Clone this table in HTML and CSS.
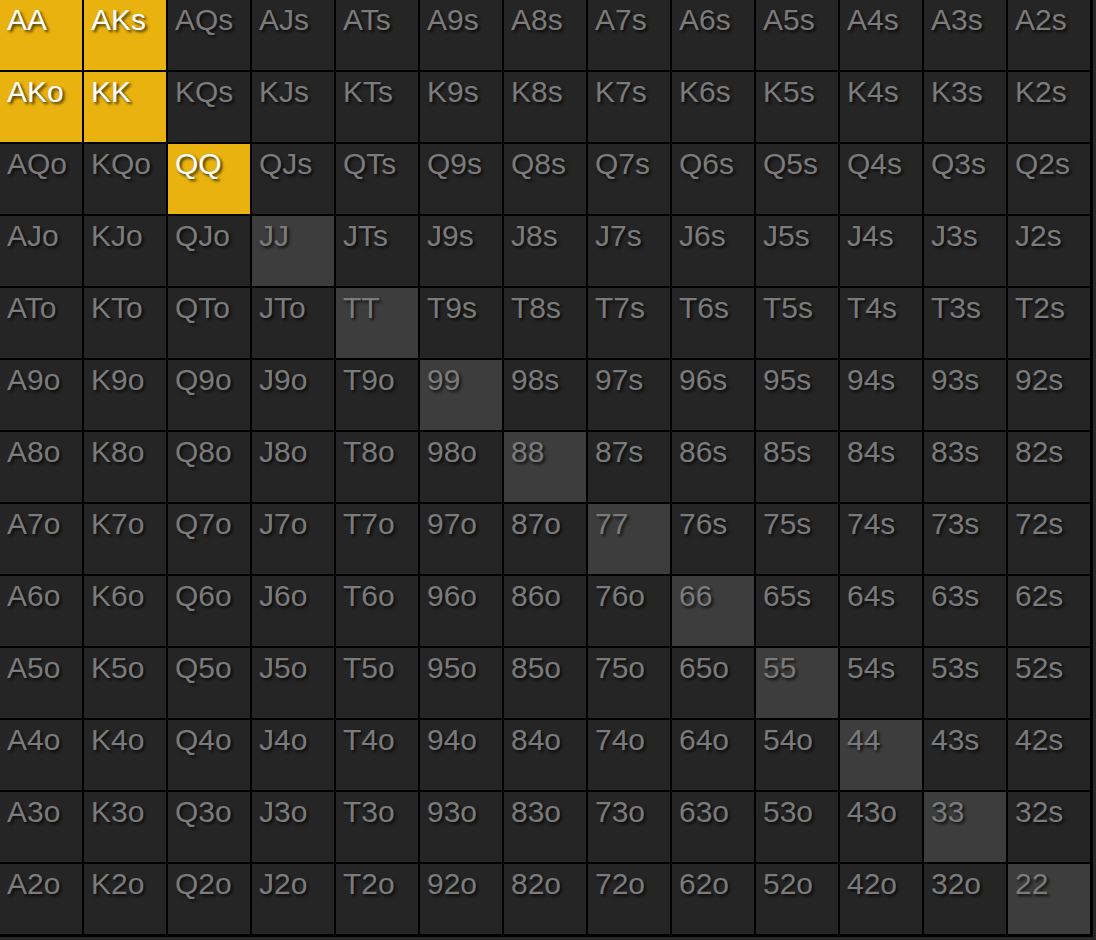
FILE: index.html
```html
<!DOCTYPE html>
<html lang="en">
<head>
<meta charset="utf-8">
<title>Hand range</title>
<link rel="stylesheet" href="styles.css">
</head>
<body>
<div class="grid">
<div class="cell on">AA</div><div class="cell on">AKs</div><div class="cell">AQs</div><div class="cell">AJs</div><div class="cell">ATs</div><div class="cell">A9s</div><div class="cell">A8s</div><div class="cell">A7s</div><div class="cell">A6s</div><div class="cell">A5s</div><div class="cell">A4s</div><div class="cell">A3s</div><div class="cell">A2s</div>
<div class="cell on">AKo</div><div class="cell on">KK</div><div class="cell">KQs</div><div class="cell">KJs</div><div class="cell">KTs</div><div class="cell">K9s</div><div class="cell">K8s</div><div class="cell">K7s</div><div class="cell">K6s</div><div class="cell">K5s</div><div class="cell">K4s</div><div class="cell">K3s</div><div class="cell">K2s</div>
<div class="cell">AQo</div><div class="cell">KQo</div><div class="cell on">QQ</div><div class="cell">QJs</div><div class="cell">QTs</div><div class="cell">Q9s</div><div class="cell">Q8s</div><div class="cell">Q7s</div><div class="cell">Q6s</div><div class="cell">Q5s</div><div class="cell">Q4s</div><div class="cell">Q3s</div><div class="cell">Q2s</div>
<div class="cell">AJo</div><div class="cell">KJo</div><div class="cell">QJo</div><div class="cell pair">JJ</div><div class="cell">JTs</div><div class="cell">J9s</div><div class="cell">J8s</div><div class="cell">J7s</div><div class="cell">J6s</div><div class="cell">J5s</div><div class="cell">J4s</div><div class="cell">J3s</div><div class="cell">J2s</div>
<div class="cell">ATo</div><div class="cell">KTo</div><div class="cell">QTo</div><div class="cell">JTo</div><div class="cell pair">TT</div><div class="cell">T9s</div><div class="cell">T8s</div><div class="cell">T7s</div><div class="cell">T6s</div><div class="cell">T5s</div><div class="cell">T4s</div><div class="cell">T3s</div><div class="cell">T2s</div>
<div class="cell">A9o</div><div class="cell">K9o</div><div class="cell">Q9o</div><div class="cell">J9o</div><div class="cell">T9o</div><div class="cell pair">99</div><div class="cell">98s</div><div class="cell">97s</div><div class="cell">96s</div><div class="cell">95s</div><div class="cell">94s</div><div class="cell">93s</div><div class="cell">92s</div>
<div class="cell">A8o</div><div class="cell">K8o</div><div class="cell">Q8o</div><div class="cell">J8o</div><div class="cell">T8o</div><div class="cell">98o</div><div class="cell pair">88</div><div class="cell">87s</div><div class="cell">86s</div><div class="cell">85s</div><div class="cell">84s</div><div class="cell">83s</div><div class="cell">82s</div>
<div class="cell">A7o</div><div class="cell">K7o</div><div class="cell">Q7o</div><div class="cell">J7o</div><div class="cell">T7o</div><div class="cell">97o</div><div class="cell">87o</div><div class="cell pair">77</div><div class="cell">76s</div><div class="cell">75s</div><div class="cell">74s</div><div class="cell">73s</div><div class="cell">72s</div>
<div class="cell">A6o</div><div class="cell">K6o</div><div class="cell">Q6o</div><div class="cell">J6o</div><div class="cell">T6o</div><div class="cell">96o</div><div class="cell">86o</div><div class="cell">76o</div><div class="cell pair">66</div><div class="cell">65s</div><div class="cell">64s</div><div class="cell">63s</div><div class="cell">62s</div>
<div class="cell">A5o</div><div class="cell">K5o</div><div class="cell">Q5o</div><div class="cell">J5o</div><div class="cell">T5o</div><div class="cell">95o</div><div class="cell">85o</div><div class="cell">75o</div><div class="cell">65o</div><div class="cell pair">55</div><div class="cell">54s</div><div class="cell">53s</div><div class="cell">52s</div>
<div class="cell">A4o</div><div class="cell">K4o</div><div class="cell">Q4o</div><div class="cell">J4o</div><div class="cell">T4o</div><div class="cell">94o</div><div class="cell">84o</div><div class="cell">74o</div><div class="cell">64o</div><div class="cell">54o</div><div class="cell pair">44</div><div class="cell">43s</div><div class="cell">42s</div>
<div class="cell">A3o</div><div class="cell">K3o</div><div class="cell">Q3o</div><div class="cell">J3o</div><div class="cell">T3o</div><div class="cell">93o</div><div class="cell">83o</div><div class="cell">73o</div><div class="cell">63o</div><div class="cell">53o</div><div class="cell">43o</div><div class="cell pair">33</div><div class="cell">32s</div>
<div class="cell">A2o</div><div class="cell">K2o</div><div class="cell">Q2o</div><div class="cell">J2o</div><div class="cell">T2o</div><div class="cell">92o</div><div class="cell">82o</div><div class="cell">72o</div><div class="cell">62o</div><div class="cell">52o</div><div class="cell">42o</div><div class="cell">32o</div><div class="cell pair">22</div>
</div>
</body>
</html>
```

FILE: styles.css
```css
html, body {
  margin: 0;
  padding: 0;
  background: #282828;
  font-family: "Liberation Sans", Arial, sans-serif;
}

.grid {
  display: grid;
  grid-template-columns: repeat(13, 82px);
  grid-auto-rows: 70px;
  gap: 2px;
  padding: 0 3px 3px 0;
  width: max-content;
  background: #000;
}

.cell {
  background: #252525;
  color: #7b7b7b;
  font-size: 30px;
  line-height: 34px;
  padding: 3px 0 0 7px;
  text-shadow: 2px 2px 3px rgba(0, 0, 0, 0.75);
  white-space: nowrap;
  overflow: hidden;
}

.cell.pair {
  background: #3d3d3d;
}

.cell.on {
  background: #e9b20e;
  color: #ffffff;
}
```
